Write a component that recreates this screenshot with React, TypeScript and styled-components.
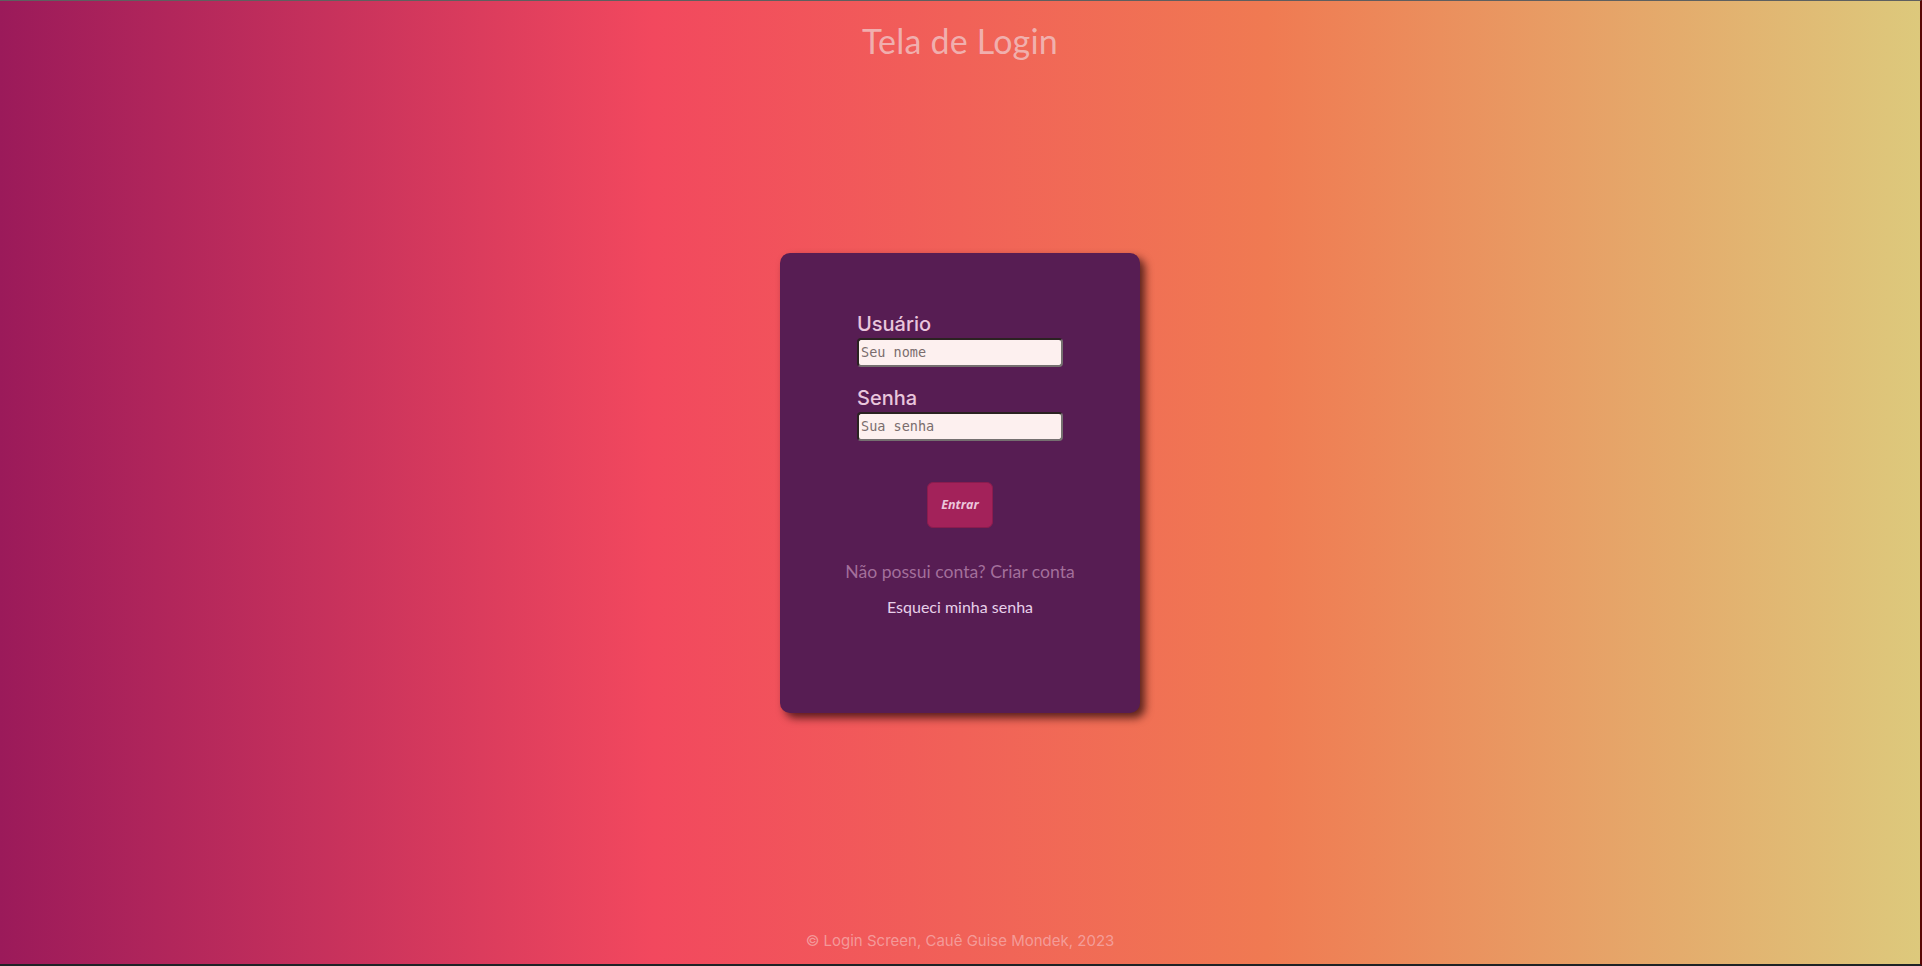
import React from "react";
import styled, { createGlobalStyle } from "styled-components";

const GlobalStyle = createGlobalStyle`
  * { box-sizing: border-box; }
  html, body { margin: 0; padding: 0; height: 100%; overflow: hidden; }
  body { font-family: "Inter", "Liberation Sans", sans-serif; }
`;

const Page = styled.div`
  height: 100vh;
  display: grid;
  grid-template-rows: 1fr auto 1fr;
  justify-items: center;
  background: linear-gradient(to right, #9b1a5a 0%, #f2485e 34%, #f07a52 66%, #ddc97c 100%);
  border-top: 1px solid #5f5f5f;
  border-right: 2px solid #5a0606;
  border-bottom: 2px solid #1f2326;
`;

const Title = styled.h1`
  align-self: start;
  margin: 0;
  padding-top: 20px;
  font-family: "Lato", "Liberation Sans", sans-serif;
  font-weight: 400;
  font-size: 34px;
  line-height: 40px;
  color: rgba(240, 190, 190, 0.85);
  letter-spacing: 0.2px;
`;

const Card = styled.div`
  width: 360px;
  height: 460px;
  background: #571d53;
  border-radius: 10px;
  box-shadow: 5px 5px 8px rgba(40, 10, 10, 0.75);
  padding-top: 59px;
  display: flex;
  flex-direction: column;
  align-items: center;
`;

const Form = styled.form`
  width: 206px;
  display: flex;
  flex-direction: column;
`;

const Label = styled.label<{ $gap?: number }>`
  font-family: "Inter", "Liberation Sans", sans-serif;
  font-weight: 500;
  font-size: 20px;
  line-height: 24px;
  color: #e9c6dc;
  margin-top: ${(p) => p.$gap ?? 0}px;
  margin-bottom: 2px;
`;

const Input = styled.input`
  width: 206px;
  height: 29px;
  border: 2px solid;
  border-color: #2b2222 #757070 #757070 #2b2222;
  border-radius: 4px;
  background: #fdf0ef;
  padding: 0 2px;
  font-family: "DejaVu Sans Mono", monospace;
  font-size: 13.5px;
  color: #333;
  outline: none;
  &::placeholder { color: #7a6d6d; }
`;

const Button = styled.button`
  margin-top: 41px;
  width: 66px;
  height: 46px;
  align-self: center;
  background: #a3225a;
  border: 1px solid #8a1c4e;
  border-radius: 6px;
  font-family: "Open Sans", "Liberation Sans", sans-serif;
  font-style: italic;
  font-weight: 700;
  font-size: 12.5px;
  color: #ecc6dc;
  padding: 0;
  cursor: pointer;
`;

const SignupText = styled.p`
  margin: 33px 0 0;
  font-family: "Lato", "Liberation Sans", sans-serif;
  font-weight: 400;
  font-size: 17.6px;
  line-height: 21px;
  color: rgba(190, 140, 180, 0.75);
`;

const ForgotLink = styled.a`
  margin-top: 15px;
  font-family: "Lato", "Liberation Sans", sans-serif;
  font-size: 16px;
  line-height: 19px;
  color: #e8d0ea;
  text-decoration: none;
  cursor: pointer;
`;

const Footer = styled.footer`
  align-self: end;
  padding-bottom: 13px;
  font-family: "Inter", "Liberation Sans", sans-serif;
  font-size: 15px;
  line-height: 20px;
  color: rgba(245, 170, 170, 0.8);
`;

export default function App() {
  return (
    <>
      <GlobalStyle />
      <Page>
        <Title>Tela de Login</Title>
        <Card>
          <Form onSubmit={(e) => e.preventDefault()}>
            <Label htmlFor="user">Usuário</Label>
            <Input id="user" type="text" placeholder="Seu nome" />
            <Label htmlFor="pass" $gap={19}>Senha</Label>
            <Input id="pass" type="password" placeholder="Sua senha" />
            <Button type="submit">Entrar</Button>
          </Form>
          <SignupText>Não possui conta? Criar conta</SignupText>
          <ForgotLink>Esqueci minha senha</ForgotLink>
        </Card>
        <Footer>© Login Screen, Cauê Guise Mondek, 2023</Footer>
      </Page>
    </>
  );
}
